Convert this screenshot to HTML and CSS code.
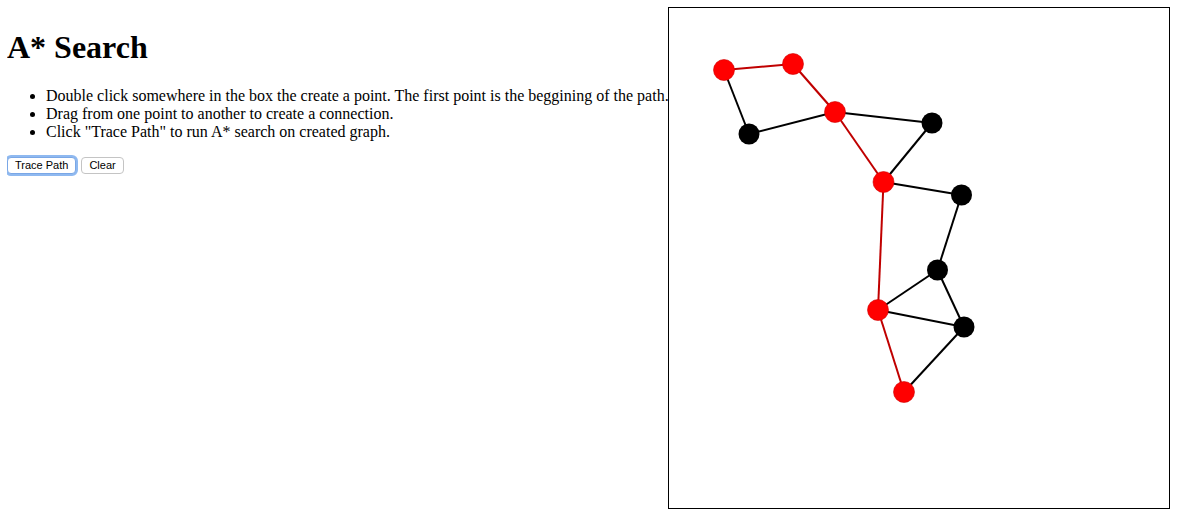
FILE: index.html
```html
<!DOCTYPE html>
<html>
<head>
<meta charset="utf-8">
<title>A* Search</title>
<link rel="stylesheet" href="styles.css">
</head>
<body>
<div class="page">
  <div class="info">
    <h1 class="title">A* Search</h1>
    <ul class="steps">
      <li>Double click somewhere in the box the create a point. The first point is the beggining of the path.</li>
      <li>Drag from one point to another to create a connection.</li>
      <li>Click "Trace Path" to run A* search on created graph.</li>
    </ul>
    <div class="actions">
      <button class="btn btn-focus" type="button">Trace Path</button>
      <button class="btn" type="button">Clear</button>
    </div>
  </div>
  <div class="board">
    <svg class="graph" width="500" height="500" viewBox="0 0 500 500">
      <g class="edges-black" stroke="#000" stroke-width="2" fill="none">
        <line x1="55" y1="62" x2="80" y2="126"/>
        <line x1="80" y1="126" x2="166" y2="104"/>
        <line x1="166" y1="104" x2="263" y2="115"/>
        <line x1="263" y1="115" x2="214.5" y2="174"/>
        <line x1="214.5" y1="174" x2="292.5" y2="187"/>
        <line x1="292.5" y1="187" x2="268.5" y2="262"/>
        <line x1="268.5" y1="262" x2="209" y2="302"/>
        <line x1="268.5" y1="262" x2="295" y2="319"/>
        <line x1="209" y1="302" x2="295" y2="319"/>
        <line x1="295" y1="319" x2="235" y2="384"/>
      </g>
      <g class="edges-red" stroke="#c00000" stroke-width="2" fill="none">
        <line x1="55" y1="62" x2="124" y2="56"/>
        <line x1="124" y1="56" x2="166" y2="104"/>
        <line x1="166" y1="104" x2="214.5" y2="174"/>
        <line x1="214.5" y1="174" x2="209" y2="302"/>
        <line x1="209" y1="302" x2="235" y2="384"/>
      </g>
      <g fill="#000">
        <circle cx="80" cy="126" r="10.5"/>
        <circle cx="263" cy="115" r="10.5"/>
        <circle cx="292.5" cy="187" r="10.5"/>
        <circle cx="268.5" cy="262" r="10.5"/>
        <circle cx="295" cy="319" r="10.5"/>
      </g>
      <g fill="#ff0000" stroke="#d00000" stroke-width="0.6">
        <circle cx="55" cy="62" r="10.5"/>
        <circle cx="124" cy="56" r="10.5"/>
        <circle cx="166" cy="104" r="10.5"/>
        <circle cx="214.5" cy="174" r="10.5"/>
        <circle cx="209" cy="302" r="10.5"/>
        <circle cx="235" cy="384" r="10.5"/>
      </g>
    </svg>
  </div>
</div>
</body>
</html>
```

FILE: styles.css
```css
html, body {
  background: #fff;
}
body {
  margin: 7px;
  font-family: "Liberation Serif", "Times New Roman", serif;
  font-size: 16px;
  color: #000;
}
.page {
  display: flex;
  align-items: flex-start;
}
.info {
  width: 661px;
  flex: none;
}
.title {
  font-size: 32px;
  font-weight: bold;
  margin: 22px 0 21px 0;
  line-height: 37px;
}
.steps {
  margin: 16px 0 16px 0;
  padding-left: 39px;
  line-height: 18px;
  white-space: nowrap;
}
.actions {
  display: flex;
  gap: 5px;
  margin-top: 10px;
}
.btn {
  font-family: "Liberation Sans", Arial, sans-serif;
  font-size: 11px;
  height: 17px;
  padding: 0 7px;
  background: #fff;
  border: 1px solid #c4c4c4;
  border-radius: 4px;
  color: #000;
  line-height: 15px;
}
.btn-focus {
  box-shadow: 0 0 0 2px #8fb9f0;
  border-color: #7aa7e6;
}
.board {
  flex: none;
  width: 500px;
  height: 500px;
  border: 1px solid #000;
}
.graph {
  display: block;
}
```
